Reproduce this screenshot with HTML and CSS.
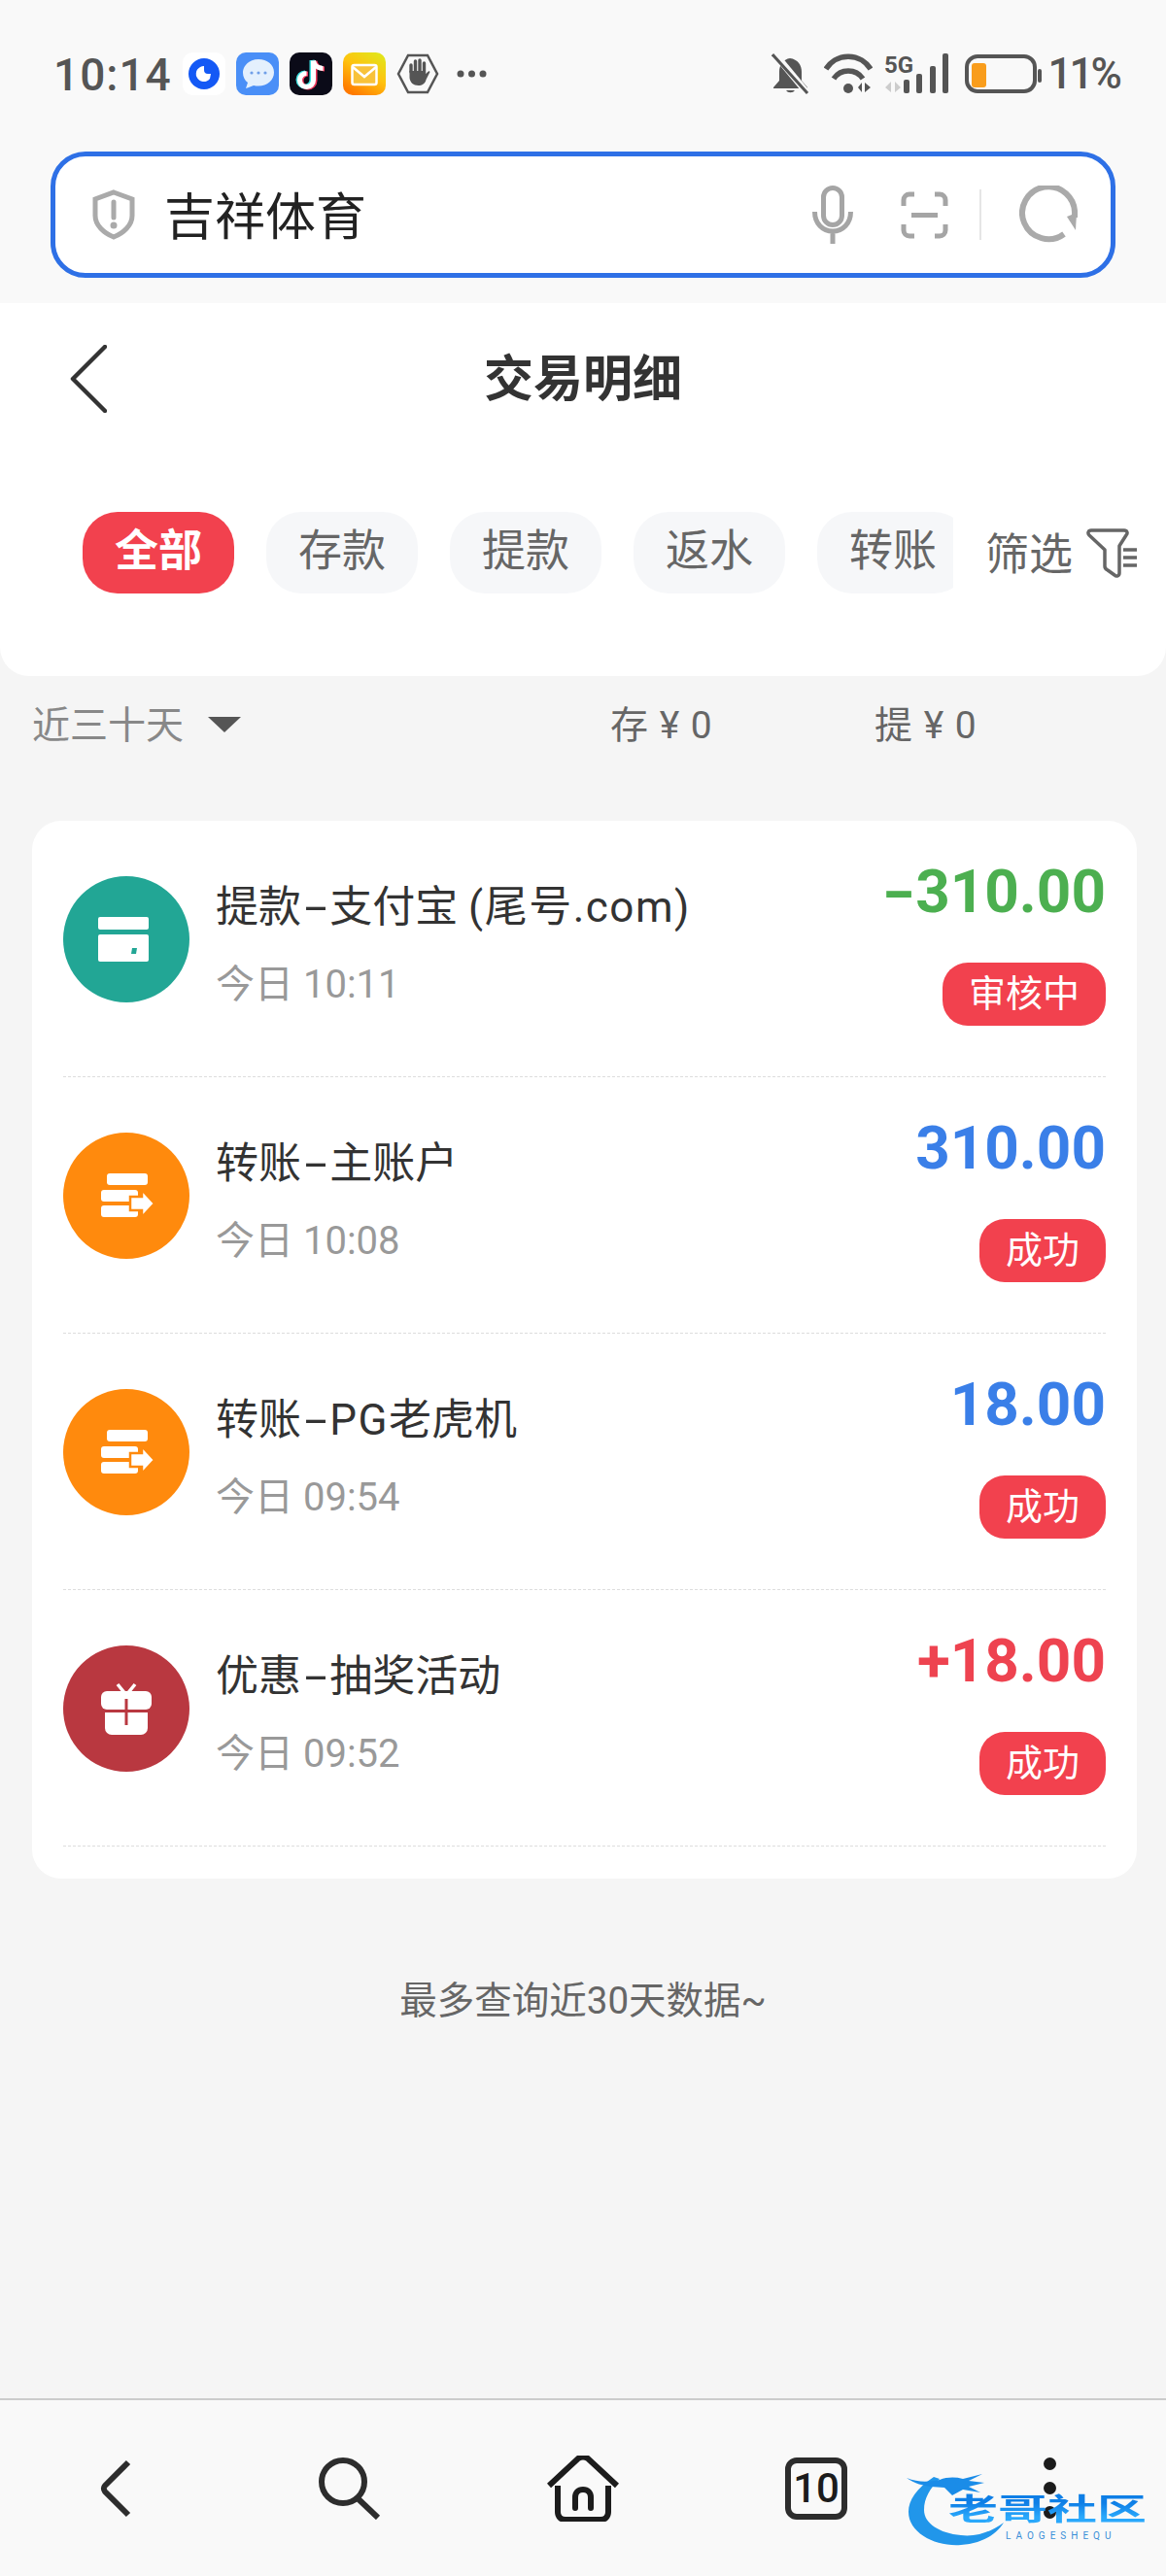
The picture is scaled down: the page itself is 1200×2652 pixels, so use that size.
FILE: index.html
```html
<!DOCTYPE html>
<html lang="zh-CN">
<head>
    <meta charset="UTF-8">
    <meta name="viewport" content="width=device-width, initial-scale=1.0">
    <title>交易明细</title>
    <link rel="stylesheet" href="styles.css">
</head>
<body>
    <!-- Browser chrome: status bar and address bar -->
    <div class="chrome">
        <div class="status">
            <span class="time">10:14</span>
            <div class="apps">
                <svg class="app" viewBox="0 0 44 44">
                    <rect width="44" height="44" rx="10" fill="#fff"/>
                    <circle cx="22" cy="22" r="16" fill="#1459f5"/>
                    <path d="M22 14a8 8 0 1 0 6 13l1-5h-3a4 4 0 0 1-4-4z" fill="#fff"/>
                </svg>
                <svg class="app" viewBox="0 0 44 44">
                    <rect width="44" height="44" rx="10" fill="#4a8ff7"/>
                    <path d="M23 7c-9 0-16 6-16 14 0 4 2 8 5 10l-2 6 8-3c2 .5 3 .5 5 .5 9 0 16-6 16-14S32 7 23 7z" fill="#e4f0fd"/>
                    <circle cx="16" cy="21" r="1.6" fill="#6f9fe8"/>
                    <circle cx="23" cy="21" r="1.6" fill="#6f9fe8"/>
                    <circle cx="30" cy="21" r="1.6" fill="#6f9fe8"/>
                </svg>
                <svg class="app" viewBox="0 0 44 44">
                    <rect width="44" height="44" rx="10" fill="#0b0b18"/>
                    <path class="note" d="M23 8v20a7 7 0 1 1-7-7M23 8c1 5 5 8 10 8" stroke="#3ce0e0"/>
                    <path class="note" d="M26 9v20a7 7 0 1 1-7-7M26 9c1 5 5 8 10 8" stroke="#f2395c"/>
                    <path class="note" d="M24.500 8.500v20a7 7 0 1 1-7-7M24.500 8.500c1 5 5 8 10 8" stroke="#fff"/>
                </svg>
                <svg class="app" viewBox="0 0 44 44">
                    <defs>
                        <linearGradient id="mailBg" x1="0.9" y1="0" x2="0.3" y2="1">
                            <stop offset="0" stop-color="#dfe81c"/>
                            <stop offset="0.5" stop-color="#ffc20e"/>
                            <stop offset="1" stop-color="#ff7a00"/>
                        </linearGradient>
                    </defs>
                    <rect width="44" height="44" rx="10" fill="url(#mailBg)"/>
                    <rect x="9.500" y="13" width="25" height="20" rx="2" fill="#f8c23a" stroke="#fff" stroke-width="2.500"/>
                    <path d="M10 15l12 10 12-10" fill="none" stroke="#fff" stroke-width="2.500"/>
                </svg>
                <svg class="app" viewBox="0 0 44 44">
                    <path d="M2 22L12 3h20l10 19-10 19H12z" fill="none" stroke="#555" stroke-width="2.500"/>
                    <path d="M15 20v-7M19.500 20V9M24 20V8M28.500 21V11" stroke="#555" stroke-width="3.400" stroke-linecap="round"/>
                    <path d="M13.500 19h16.500v3l3.500-3 1 1-4 8c-1 4-4 6-8 6-5 0-8.500-3-9-8z" fill="#555"/>
                </svg>
                <svg class="more" viewBox="0 0 31 8">
                    <circle cx="4" cy="4" r="3.500"/>
                    <circle cx="15.500" cy="4" r="3.500"/>
                    <circle cx="27" cy="4" r="3.500"/>
                </svg>
            </div>
            <div class="indicators">
                <svg class="bell" viewBox="0 0 39 44">
                    <path d="M19 6c-7 1-11 7-11 14v9l-6 7v1h35v-1l-6-7v-9c0-7-4-13-12-14z" fill="#555"/>
                    <path d="M15 39a5 4 0 0 0 9 0z" fill="#555"/>
                    <path d="M3 1l34 41" stroke="#f9f9f9" stroke-width="7"/>
                    <path d="M1 2l36 40" stroke="#555" stroke-width="3"/>
                </svg>
                <svg class="wifi" viewBox="0 0 50 42">
                    <path d="M2 16a27 27 0 0 1 46 0M10 26a18 18 0 0 1 30 0" fill="none" stroke="#555" stroke-width="5.500"/>
                    <circle cx="25" cy="36" r="5" fill="#555"/>
                    <path d="M39 40V30l-4 5zM42 30v10l6-5z" fill="#555"/>
                </svg>
                <svg class="signal" viewBox="0 0 67 42">
                    <text class="five-g" x="0" y="20">5G</text>
                    <path d="M7 40V29l-6 6zM11 29v11l6-5z" fill="#ccc"/>
                    <rect x="20" y="27" width="6" height="14" rx="2" fill="#555"/>
                    <rect x="33" y="21" width="6" height="20" rx="2" fill="#555"/>
                    <rect x="47" y="13" width="6" height="28" rx="2" fill="#555"/>
                    <rect x="60" y="0" width="6" height="41" rx="2" fill="#555"/>
                </svg>
                <svg class="battery" viewBox="0 0 80 40">
                    <rect x="2" y="2" width="70" height="36" rx="11" fill="none" stroke="#555" stroke-width="4"/>
                    <rect x="7" y="9" width="15" height="25" rx="3" fill="#f99d1c"/>
                    <rect x="75" y="15" width="4" height="14" rx="2" fill="#555"/>
                </svg>
                <span class="percent">11%</span>
            </div>
        </div>
        <div class="search">
            <svg class="shield" viewBox="0 0 46 52">
                <path d="M23 3l19 7v17c0 10-9 18-19 22C13 45 4 37 4 27V10z" fill="none" stroke="#aaa" stroke-width="5"/>
                <path d="M23 13v16" stroke="#aaa" stroke-width="5" stroke-linecap="round"/>
                <circle cx="23" cy="37" r="3.500" fill="#aaa"/>
            </svg>
            <span class="query">吉祥体育</span>
            <svg class="mic" viewBox="0 0 42 60">
                <rect x="11.500" y="2.500" width="19" height="38" rx="9.500" fill="none" stroke="#a5a5a5" stroke-width="5"/>
                <path d="M2.500 27c0 12 8 20 18.500 20s18.500-8 18.500-20M21 47v13" fill="none" stroke="#a5a5a5" stroke-width="5"/>
            </svg>
            <svg class="scan" viewBox="0 0 49 49">
                <path d="M14 3H9a6 6 0 0 0-6 6v6M35 3h5a6 6 0 0 1 6 6v6M14 46H9a6 6 0 0 1-6-6v-6M35 46h5a6 6 0 0 0 6-6v-6M11 24.500h27" fill="none" stroke="#a5a5a5" stroke-width="5"/>
            </svg>
            <span class="divider"></span>
            <svg class="reload" viewBox="0 0 60 60">
                <path d="M46 50A27 27 0 1 1 57 30v3" fill="none" stroke="#aaa" stroke-width="6"/>
                <path d="M49 32l9 14 1-18z" fill="#aaa"/>
            </svg>
        </div>
    </div>

    <div class="panel">
        <div class="header">
            <svg class="back" viewBox="0 0 38 70">
                <path d="M36 2L3 35l33 33" fill="none" stroke="#333" stroke-width="4.500" stroke-linecap="round" stroke-linejoin="round"/>
            </svg>
            <h1>交易明细</h1>
        </div>
        <div class="filters">
            <div class="tabs">
                <span class="tab active">全部</span>
                <span class="tab">存款</span>
                <span class="tab">提款</span>
                <span class="tab">返水</span>
                <span class="tab">转账</span>
            </div>
            <span class="filter-label">筛选</span>
            <svg class="funnel" viewBox="0 0 52 51">
                <path d="M5 2h34c3 0 4 3 2 5L34 18v28c0 3-3 4-5 2l-7-5c-2-1-3-2-3-4V22L3 7C1 5 2 2 5 2z" fill="none" stroke="#666" stroke-width="3.500" stroke-linejoin="round"/>
                <path d="M38 22h14M38 30h14M38 38h14" stroke="#666" stroke-width="3.500"/>
            </svg>
        </div>
    </div>

    <div class="summary">
        <span class="range">近三十天<i class="caret"></i></span>
        <span class="total">存 ¥ 0</span>
        <span class="total">提 ¥ 0</span>
    </div>

    <div class="list">
        <div class="row">
            <div class="badge-icon teal">
                <svg viewBox="0 0 130 130">
                    <rect x="36" y="42" width="52" height="13" rx="2" fill="#fff"/>
                    <rect x="36" y="60" width="52" height="28" rx="2" fill="#fff"/>
                    <path d="M71 74h5l-1 6h-5z" fill="#22a695"/>
                </svg>
            </div>
            <div class="info">
                <div class="name">提款<span class="dash">-</span>支付宝 <span class="latin">(尾号.com)</span></div>
                <div class="when">今日 10:11</div>
            </div>
            <div class="side">
                <div class="amount green"><span class="minus">-</span>310.00</div>
                <span class="state">审核中</span>
            </div>
        </div>
        <div class="row">
            <div class="badge-icon orange">
                <svg viewBox="0 0 130 130">
                    <rect x="45" y="42" width="42" height="12" rx="3" fill="#fff"/>
                    <rect x="39" y="59" width="38" height="12" rx="3" fill="#fff"/>
                    <rect x="39" y="75" width="38" height="12" rx="3" fill="#fff"/>
                    <path d="M69 66h12v-7l13 14-13 14v-7H69z" fill="#fff" stroke="#ff8a0d" stroke-width="2.500"/>
                </svg>
            </div>
            <div class="info">
                <div class="name">转账<span class="dash">-</span>主账户</div>
                <div class="when">今日 10:08</div>
            </div>
            <div class="side">
                <div class="amount blue">310.00</div>
                <span class="state">成功</span>
            </div>
        </div>
        <div class="row">
            <div class="badge-icon orange">
                <svg viewBox="0 0 130 130">
                    <rect x="45" y="42" width="42" height="12" rx="3" fill="#fff"/>
                    <rect x="39" y="59" width="38" height="12" rx="3" fill="#fff"/>
                    <rect x="39" y="75" width="38" height="12" rx="3" fill="#fff"/>
                    <path d="M69 66h12v-7l13 14-13 14v-7H69z" fill="#fff" stroke="#ff8a0d" stroke-width="2.500"/>
                </svg>
            </div>
            <div class="info">
                <div class="name">转账<span class="dash">-</span><span class="latin">PG</span>老虎机</div>
                <div class="when">今日 09:54</div>
            </div>
            <div class="side">
                <div class="amount blue">18.00</div>
                <span class="state">成功</span>
            </div>
        </div>
        <div class="row">
            <div class="badge-icon crimson">
                <svg viewBox="0 0 130 130">
                    <path d="M56 40l9 11 9-11" fill="none" stroke="#fff" stroke-width="3.500"/>
                    <rect x="39" y="47" width="52" height="19" rx="6" fill="#fff"/>
                    <path d="M43 69h44v16a7 7 0 0 1-7 7H50a7 7 0 0 1-7-7z" fill="#fff"/>
                    <path d="M65 55v27" stroke="#b93840" stroke-width="3"/>
                </svg>
            </div>
            <div class="info">
                <div class="name">优惠<span class="dash">-</span>抽奖活动</div>
                <div class="when">今日 09:52</div>
            </div>
            <div class="side">
                <div class="amount red">+18.00</div>
                <span class="state">成功</span>
            </div>
        </div>
    </div>

    <p class="note-line">最多查询近30天数据~</p>

    <nav class="nav">
        <div class="nav-item">
            <svg class="nav-back" width="32" height="60" viewBox="0 0 32 60">
                <path d="M29 3L5 27c-1.500 1.500-1.500 4 0 6l24 24" fill="none" stroke="#2d2d2d" stroke-width="6"/>
            </svg>
        </div>
        <div class="nav-item">
            <svg width="64" height="64" viewBox="0 0 64 64">
                <ellipse cx="25" cy="25" rx="22" ry="22" fill="none" stroke="#2d2d2d" stroke-width="6"/>
                <path d="M40 42l21 20" stroke="#2d2d2d" stroke-width="6"/>
            </svg>
        </div>
        <div class="nav-item">
            <svg width="74" height="68" viewBox="0 0 74 68">
                <path d="M2 31L32 3c3-2 7-2 10 0l30 28" fill="none" stroke="#1c1c1c" stroke-width="6"/>
                <path d="M11 31v27c0 5 3 8 8 8h36c5 0 8-3 8-8V31" fill="none" stroke="#1c1c1c" stroke-width="6"/>
                <path d="M29 54V43c0-5 3-8 8-8s8 3 8 8v11" fill="none" stroke="#1c1c1c" stroke-width="6" stroke-linecap="round"/>
            </svg>
        </div>
        <div class="nav-item">
            <span class="tab-count">10</span>
        </div>
        <div class="nav-item">
            <div class="dots"><i></i><i></i><i></i></div>
        </div>
        <div class="watermark">
            <svg class="dragon" viewBox="0 0 110 84">
                <path d="M28 10C10 22 2 34 2 46c0 22 28 36 54 34 20-1 36-10 44-23-12 9-28 15-44 13-22-2-38-12-38-26 0-12 6-22 16-32z" fill="#2196ea"/>
                <path d="M0 11c12 5 24 4 34 2 8-3 16-3 24-1l20-5-14 7 16 2-16 4 12 6-18-3-11 6-8-8-14-1C18 19 8 17 0 11z" fill="#1a8ce8"/>
            </svg>
            <span class="wm-title">老哥社区</span>
            <span class="wm-sub">LAOGESHEQU</span>
        </div>
    </nav>
</body>
</html>
```

FILE: styles.css
```css
* {
    box-sizing: border-box;
}

body {
    margin: 0;
    height: 2652px;
    display: flex;
    flex-direction: column;
    background-color: #f5f5f5;
    font-family: Roboto, "Noto Sans CJK SC", sans-serif;
    overflow: hidden;
}

svg {
    display: block;
    flex: none;
}

/* top chrome */
.chrome {
    height: 312px;
    background-color: #f9f9f9;
}

.status {
    height: 152px;
    margin-bottom: 4px;
    padding: 0 48px 0 55px;
    display: flex;
    align-items: center;
}

.time {
    width: 133px;
    padding-top: 2px;
    font-size: 46px;
    font-weight: 500;
    letter-spacing: 1px;
    color: #555;
}

.apps {
    display: flex;
    align-items: center;
    gap: 11px;
}

.app {
    width: 44px;
    height: 44px;
}

.note {
    fill: none;
    stroke-width: 5;
}

.more {
    width: 31px;
    height: 8px;
    margin-left: 7px;
    fill: #555;
}

.indicators {
    margin-left: auto;
    display: flex;
    align-items: center;
}

.bell {
    width: 39px;
    height: 44px;
}

.wifi {
    width: 50px;
    height: 42px;
    margin-left: 15px;
}

.signal {
    width: 67px;
    height: 42px;
    margin-left: 12px;
    overflow: visible;
}

.five-g {
    font-family: "Liberation Sans Narrow", Roboto, sans-serif;
    font-size: 24px;
    font-weight: 700;
    fill: #555;
}

.battery {
    width: 80px;
    height: 40px;
    margin-left: 16px;
}

.percent {
    margin-left: 6px;
    font-size: 44px;
    font-weight: 500;
    letter-spacing: -3px;
    color: #555;
}

.search {
    height: 130px;
    margin: 0 52px;
    padding: 0 34px 0 37px;
    display: flex;
    align-items: center;
    background-color: #fff;
    border: 5px solid #2e70e6;
    border-radius: 36px;
}

.shield {
    width: 46px;
    height: 52px;
}

.query {
    margin: 0 0 3px 29px;
    font-size: 52px;
    color: #222;
}

.mic {
    width: 42px;
    height: 60px;
    margin-left: auto;
}

.scan {
    width: 49px;
    height: 49px;
    margin-left: 49px;
}

.divider {
    width: 2px;
    height: 52px;
    margin: 0 39px 0 32px;
    background-color: #e5e5e5;
}

.reload {
    width: 60px;
    height: 60px;
}

/* white panel with title and tabs */
.panel {
    height: 384px;
    background-color: #fff;
    border-radius: 0 0 30px 30px;
}

.header {
    position: relative;
    height: 152px;
    display: flex;
    align-items: center;
    justify-content: center;
}

.back {
    position: absolute;
    left: 72px;
    top: 43px;
    width: 38px;
    height: 70px;
}

h1 {
    margin: 0 0 5px;
    font-size: 51px;
    font-weight: 700;
    color: #333;
}

.filters {
    margin-top: 63px;
    padding-left: 85px;
    display: flex;
    align-items: center;
}

.tabs {
    width: 896px;
    display: flex;
    gap: 33px;
    overflow: hidden;
}

.tab {
    flex: none;
    width: 156px;
    height: 84px;
    line-height: 81px;
    text-align: center;
    font-size: 45px;
    color: #666;
    background-color: #f6f7f9;
    border-radius: 36px;
}

.tab.active {
    font-weight: 700;
    color: #fff;
    background-color: #f2414e;
}

.filter-label {
    margin: 0 0 4px 33px;
    font-size: 45px;
    color: #666;
}

.funnel {
    width: 52px;
    height: 51px;
    margin-left: 14px;
}

/* totals line */
.summary {
    height: 98px;
    padding: 0 0 4px 33px;
    display: flex;
    align-items: center;
    font-size: 39px;
    color: #666;
}

.range {
    width: 595px;
    display: flex;
    align-items: center;
    color: #888;
}

.caret {
    width: 0;
    height: 0;
    margin: 5px 0 0 25px;
    border-left: 17px solid transparent;
    border-right: 17px solid transparent;
    border-top: 16px solid #555;
}

.total {
    width: 272px;
    letter-spacing: 1px;
}

/* record list */
.list {
    margin: 51px 30px 0 33px;
    padding: 0 32px 33px 32px;
    background-color: #fff;
    border-radius: 30px;
}

.row {
    height: 264px;
    padding-top: 37px;
    display: flex;
    align-items: flex-start;
    border-bottom: 1px dashed #ddd;
}

.badge-icon {
    width: 130px;
    height: 130px;
    margin-top: 20px;
    border-radius: 50%;
}

.teal {
    background-color: #22a695;
}

.orange {
    background-color: #ff8a0d;
}

.crimson {
    background-color: #b93840;
}

.info {
    margin: 22px 0 0 27px;
}

.name {
    line-height: 60px;
    font-size: 44px;
    color: #333;
}

/* the screenshot's hyphens are about twice as wide as Roboto's */
.dash {
    display: inline-block;
    margin: 0 8.5px;
    transform: scaleX(1.9);
}

.latin {
    letter-spacing: 1.5px;
}

.when {
    margin-top: 20px;
    line-height: 60px;
    font-size: 40px;
    color: #999;
}

.side {
    margin-left: auto;
    display: flex;
    flex-direction: column;
    align-items: flex-end;
}

.amount {
    margin-top: 1px;
    line-height: 70px;
    font-size: 62px;
    font-weight: 700;
}

.minus {
    display: inline-block;
    margin-right: 5px;
    transform: scaleX(1.5);
}

.green {
    color: #4caf50;
}

.blue {
    color: #3a7fe8;
}

.red {
    color: #ee4350;
}

.state {
    height: 65px;
    margin-top: 38px;
    padding: 0 27px;
    line-height: 65px;
    font-size: 38px;
    color: #fff;
    background-color: #f2414e;
    border-radius: 26px;
}

.note-line {
    margin: 96px 0 0;
    line-height: 60px;
    text-align: center;
    font-size: 38.5px;
    color: #666;
}

/* bottom navigation */
.nav {
    position: relative;
    height: 183px;
    margin-top: auto;
    display: flex;
    align-items: flex-start;
    background-color: #f9f9f9;
    border-top: 2px solid #ccc;
}

.nav-item {
    flex: 1;
    height: 181px;
    display: flex;
    align-items: center;
    justify-content: center;
}

.nav-back {
    margin-right: 3px;
}

.tab-count {
    width: 64px;
    height: 64px;
    line-height: 52px;
    text-align: center;
    font-size: 42px;
    font-weight: 500;
    color: #1c1c1c;
    border: 6px solid #2d2d2d;
    border-radius: 12px;
}

.dots {
    display: flex;
    flex-direction: column;
    gap: 12px;
}

.dots i {
    width: 13px;
    height: 13px;
    border-radius: 50%;
    background-color: #1c1c1c;
}

/* site watermark laid over the nav bar */
.watermark {
    position: absolute;
    left: 933px;
    top: 69px;
    width: 250px;
    height: 84px;
    pointer-events: none;
}

.dragon {
    position: absolute;
    left: 0;
    top: 0;
    width: 110px;
    height: 84px;
    filter: blur(0.6px);
}

.wm-title {
    position: absolute;
    left: 43px;
    top: 14px;
    font-size: 51px;
    line-height: 60px;
    font-weight: 700;
    white-space: nowrap;
    color: transparent;
    background: linear-gradient(#0f7fe6 30%, #2aa8fb 70%);
    -webkit-background-clip: text;
    background-clip: text;
    transform: scaleY(0.6);
    filter: blur(0.6px);
}

.wm-sub {
    position: absolute;
    left: 102px;
    top: 65px;
    font-size: 10px;
    line-height: 12px;
    letter-spacing: 5px;
    white-space: nowrap;
    color: #3a8fd8;
}
```
